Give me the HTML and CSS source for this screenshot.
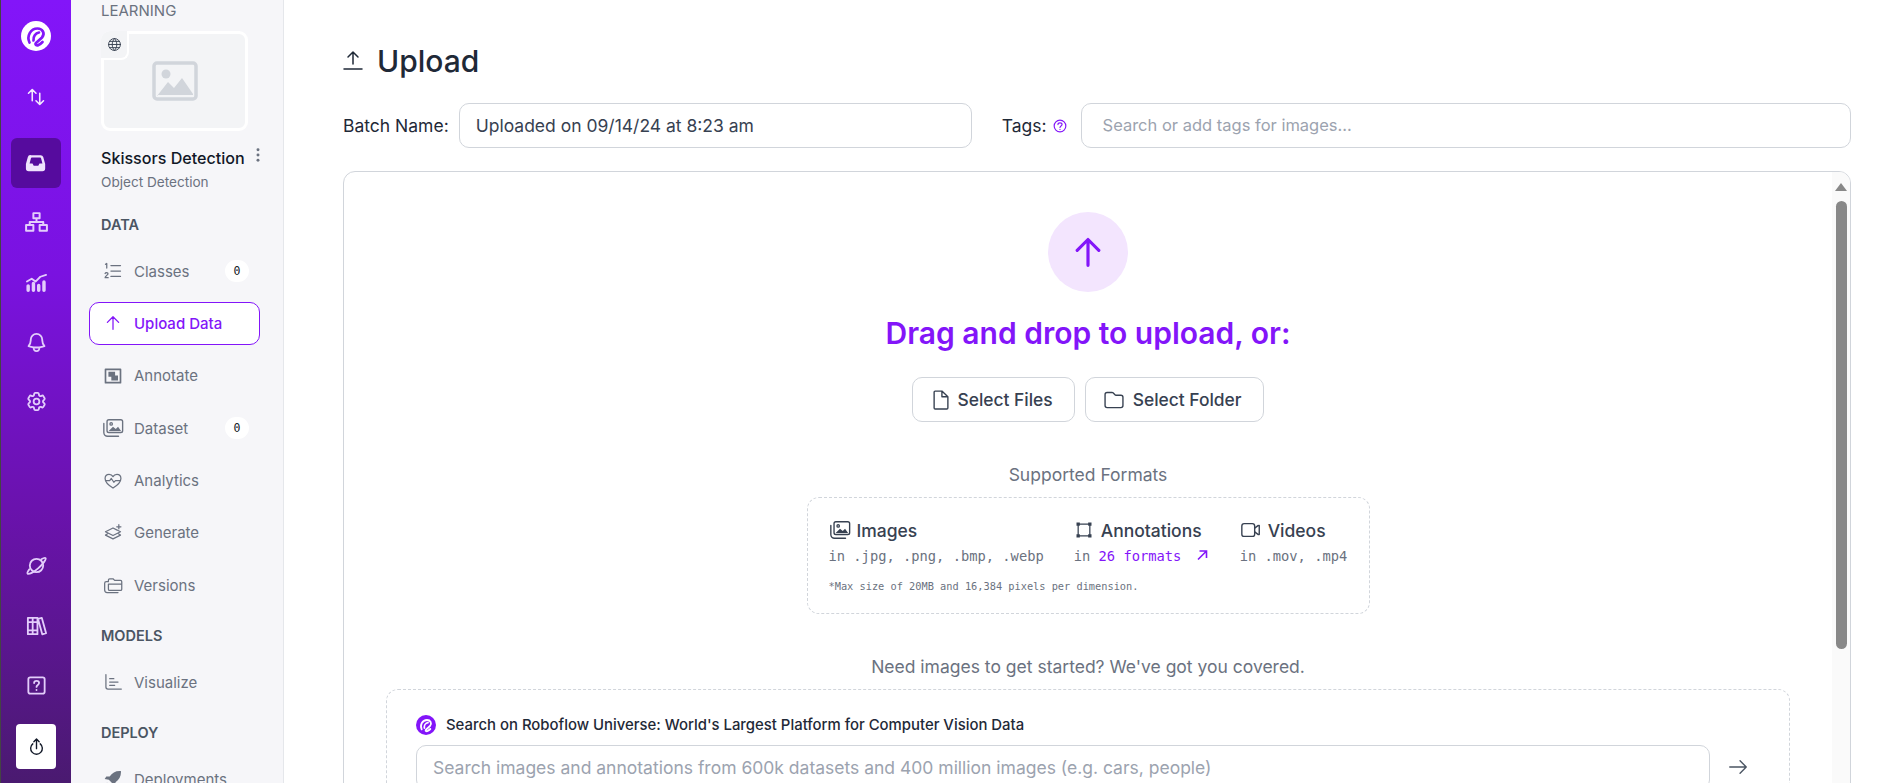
FILE: index.html
```html
<!DOCTYPE html>
<html lang="en">
<head>
	<meta charset="UTF-8">
	<title>Upload</title>
	<link rel="stylesheet" href="styles.css">
</head>
<body>
	<div class="app">
		<nav class="rail">
			<a class="rail-item logo" href="#">
				<svg viewBox="0 0 30 30" width="30" height="30"><circle cx="15" cy="15" r="15" fill="#fff"/><path d="M8.500 21.500C5.500 15 9.500 7.500 16.500 7.500c5 0 8 5 4.500 9l-6 5.500c-1.500 1.500.5 3 2.500 2 1.500-.7 3-2 4-3M12.500 19.500c-.5-4 2-7.500 5.500-8" fill="none" stroke="#8315f9" stroke-width="2.700" stroke-linecap="round"/></svg>
			</a>
			<a class="rail-item arrows" href="#">
				<svg class="icon" viewBox="0 0 24 24" width="20" height="20"><path d="M3 7.500 7.500 3m0 0L12 7.500M7.500 3v13.500m13.500 0L16.500 21m0 0L12 16.500m4.500 4.500V7.500"/></svg>
			</a>
			<a class="rail-item active" href="#">
				<svg class="solid" viewBox="0 0 24 24" width="22" height="22"><path fill-rule="evenodd" d="M7 3.500h10a3 3 0 0 1 2.900 2l2.100 7.500v5a3 3 0 0 1-3 3H4a3 3 0 0 1-3-3v-5l2.100-7.500A3 3 0 0 1 7 3.500Zm.5 2.500a1 1 0 0 0-1 .7L5 12.500h3.200l1.300 2.500h5l1.300-2.500H19l-1.500-5.800a1 1 0 0 0-1-.7Z"/></svg>
			</a>
			<a class="rail-item" href="#">
				<svg class="icon" viewBox="0 0 24 24" width="25" height="25"><path d="M9 3h6v5H9zM12 8v3.500M5.500 11.500h13M5.500 11.500v3M18.500 11.500v3M2 14.500h7V20H2zM15 14.500h7V20h-7z"/></svg>
			</a>
			<a class="rail-item" href="#">
				<svg class="icon" viewBox="0 0 24 24" width="23" height="23"><path d="M2 11l5-3 4 3 5-5 6-2"/><path class="fill" d="M1.500 15.500a1.800 1.800 0 0 1 3.600 0V20a1.800 1.800 0 0 1-3.600 0zM7 13a1.800 1.800 0 0 1 3.600 0v7a1.800 1.800 0 0 1-3.600 0zM12.500 15a1.800 1.800 0 0 1 3.600 0v5a1.800 1.800 0 0 1-3.600 0zM18 11.500a1.800 1.800 0 0 1 3.600 0V20a1.800 1.800 0 0 1-3.600 0z"/></svg>
			</a>
			<a class="rail-item" href="#">
				<svg class="icon" viewBox="0 0 24 24" width="23" height="23"><path d="M14.857 17.082a23.848 23.848 0 0 0 5.454-1.31A8.967 8.967 0 0 1 18 9.75V9A6 6 0 0 0 6 9v.75a8.967 8.967 0 0 1-2.312 6.022c1.733.64 3.56 1.085 5.455 1.31m5.714 0a24.255 24.255 0 0 1-5.714 0m5.714 0a3 3 0 1 1-5.714 0"/></svg>
			</a>
			<a class="rail-item" href="#">
				<svg class="icon" viewBox="0 0 24 24" width="23" height="23"><path d="M9.594 3.94c.09-.542.56-.94 1.11-.94h2.593c.55 0 1.02.398 1.11.94l.213 1.281c.063.374.313.686.645.87.074.04.147.083.22.127.325.196.72.257 1.075.124l1.217-.456a1.125 1.125 0 0 1 1.37.49l1.296 2.247a1.125 1.125 0 0 1-.26 1.431l-1.003.827c-.293.241-.438.613-.43.992a7.723 7.723 0 0 1 0 .255c-.008.378.137.75.43.991l1.004.827c.424.35.534.955.26 1.43l-1.298 2.247a1.125 1.125 0 0 1-1.369.491l-1.217-.456c-.355-.133-.75-.072-1.076.124a6.47 6.47 0 0 1-.22.128c-.331.183-.581.495-.644.869l-.213 1.281c-.09.543-.56.94-1.11.94h-2.594c-.55 0-1.019-.398-1.11-.94l-.213-1.281c-.062-.374-.312-.686-.644-.87a6.52 6.52 0 0 1-.22-.127c-.325-.196-.72-.257-1.076-.124l-1.217.456a1.125 1.125 0 0 1-1.369-.49l-1.297-2.247a1.125 1.125 0 0 1 .26-1.431l1.004-.827c.292-.24.437-.613.43-.991a6.932 6.932 0 0 1 0-.255c.007-.38-.138-.751-.43-.992l-1.004-.827a1.125 1.125 0 0 1-.26-1.43l1.297-2.247a1.125 1.125 0 0 1 1.37-.491l1.216.456c.356.133.751.072 1.076-.124.072-.044.146-.086.22-.128.332-.183.582-.495.644-.869l.214-1.28ZM15 12a3 3 0 1 1-6 0 3 3 0 0 1 6 0Z"/></svg>
			</a>
			<div class="rail-space"></div>
			<a class="rail-item" href="#">
				<svg class="icon" viewBox="0 0 24 24" width="23" height="23"><circle cx="12" cy="12" r="7"/><path d="M17 5.500c2.500-1.500 4-1.800 4.500-1.200.9 1-2.500 6-7.500 10.500S4 21.500 2.800 20.600c-.6-.5-.1-2.200 1.700-4.600"/></svg>
			</a>
			<a class="rail-item" href="#">
				<svg class="icon" viewBox="0 0 24 24" width="23" height="23"><path d="M3 4h5v17H3zM8 4h5v17H8zM3 8.500h10M3 17h10M13.500 5l4-1 4.500 16-4 1.200z"/></svg>
			</a>
			<a class="rail-item" href="#">
				<svg class="icon" viewBox="0 0 24 24" width="23" height="23"><rect x="3.500" y="3.500" width="17" height="17" rx="2"/><path d="M9.500 9.500c0-3.200 5.200-3.200 5.200 0 0 2-2.700 2-2.700 4M12 16.500v.3"/></svg>
			</a>
			<a class="rail-upload" href="#">
				<svg class="icon" viewBox="0 0 16 16" width="17" height="17"><path d="M4.500 5.500A5.500 5.500 0 1 0 11.500 5.500M8 10V1M5.500 3.500 8 1l2.500 2.500"/></svg>
			</a>
		</nav>

		<aside class="sidebar">
			<div class="group-name">LEARNING</div>
			<div class="thumb">
				<span class="thumb-badge">
					<svg class="icon" viewBox="0 0 24 24" width="15" height="15"><circle cx="12" cy="12" r="9.500"/><path d="M2.500 12h19M4 7h16M4 17h16M12 2.500c-5 5-5 14 0 19M12 2.500c5 5 5 14 0 19"/></svg>
				</span>
				<svg class="thumb-img" viewBox="0 0 46 40" width="46" height="40"><rect x="2" y="2" width="42" height="36" rx="3" fill="none" stroke="#d1d5db" stroke-width="3.500"/><circle cx="14" cy="13" r="4.500" fill="#d1d5db"/><path d="M5 35l11-14 6 6 8-10 11 16v1H5z" fill="#d1d5db"/></svg>
			</div>
			<div class="project">
				<span class="project-name">Skissors Detection</span>
				<svg viewBox="0 0 4 16" width="4" height="14" fill="#6b7280"><circle cx="2" cy="2" r="1.700"/><circle cx="2" cy="8" r="1.700"/><circle cx="2" cy="14" r="1.700"/></svg>
			</div>
			<div class="project-type">Object Detection</div>

			<h4 class="section first">DATA</h4>
			<a class="item" href="#">
				<svg class="icon" viewBox="0 0 24 24" width="20" height="20"><path d="M9.500 5.500H21M9.500 12H21M9.500 18.500H21M3 4l1.500-1v5.500M2.500 15c.5-1.500 3.500-1.500 3.500.2 0 1.300-3.500 3-3.500 4.800h3.700"/></svg>
				<span>Classes</span><em class="count">0</em>
			</a>
			<a class="item current" href="#">
				<svg class="icon" viewBox="0 0 24 24" width="20" height="20"><path d="M12 19.500v-15m0 0-6.750 6.750M12 4.500l6.750 6.750"/></svg>
				<span>Upload Data</span>
			</a>
			<a class="item" href="#">
				<svg class="icon" viewBox="0 0 24 24" width="20" height="20"><rect x="3" y="4" width="18" height="16" stroke-width="2"/><path class="fill" d="M6.500 7h8v4.500h3.500v6h-8v-4.500H6.500z"/></svg>
				<span>Annotate</span>
			</a>
			<a class="item" href="#">
				<svg class="icon" viewBox="0 0 24 24" width="22" height="22"><path d="M2 7v10a4 4 0 0 0 4 4h12"/><rect x="5.500" y="3" width="17" height="14" rx="2"/><circle cx="10" cy="7.500" r="1.300"/><path class="fill" d="M7 15.500l5-5 3 2.500 2.500-2.500 3.500 5z"/></svg>
				<span>Dataset</span><em class="count">0</em>
			</a>
			<a class="item" href="#">
				<svg class="icon" viewBox="0 0 24 24" width="20" height="20"><path d="M12 20.500C8 18 2.500 14 2.500 9c0-3 2.200-5 4.800-5 2 0 3.700 1 4.700 2.800C13 5 14.700 4 16.700 4c2.600 0 4.800 2 4.800 5 0 5-5.500 9-9.500 11.500zM3 11.500h5l2-2.500 3 4.500 2-2h6"/></svg>
				<span>Analytics</span>
			</a>
			<a class="item" href="#">
				<svg class="icon" viewBox="0 0 24 24" width="20" height="20"><path d="M3 10.500 12 6l5 2.500M3 10.500l9 4.500 9-4.500-3-1.500M5.500 13 3 14.500l9 4.500 9-4.500-2.500-1.500M19 2v5M16.500 4.500h5"/></svg>
				<span>Generate</span>
			</a>
			<a class="item" href="#">
				<svg class="icon" viewBox="0 0 24 24" width="20" height="20"><path d="M6.500 7.500V6a1.500 1.500 0 0 1 1.500-1.500h4l2 2h7a1.500 1.500 0 0 1 1.500 1.500v9a1.500 1.500 0 0 1-1.500 1.500H8A1.500 1.500 0 0 1 6.500 17V11h16M6.500 8H4A2 2 0 0 0 2 10v8a3 3 0 0 0 3 3h13"/></svg>
				<span>Versions</span>
			</a>

			<h4 class="section">MODELS</h4>
			<a class="item" href="#">
				<svg class="icon" viewBox="0 0 24 24" width="20" height="20"><path d="M3.500 3v15a2.500 2.500 0 0 0 2.500 2.500h16M8 8h5M8 12h10M8 16h6"/></svg>
				<span>Visualize</span>
			</a>

			<h4 class="section">DEPLOY</h4>
			<a class="item" href="#">
				<svg class="solid" viewBox="0 0 24 24" width="20" height="20"><path d="M21.500 2.500c-6-.5-10.500 2-13.500 6.500H4l-2 3 5 1 4 4 1 5 3-2v-4c4.500-3 7-7.500 6.500-13.500zM5 16.500c-2 1-2.500 3-2.500 5 2 0 4-.5 5-2.500z"/></svg>
				<span>Deployments</span>
			</a>
		</aside>

		<main class="main">
			<h1 class="title">
				<svg class="icon" viewBox="0 0 20 24" width="20" height="24"><path d="M10 15V3M5 8l5-5 5 5M1 20h18"/></svg>
				Upload
			</h1>

			<div class="fields">
				<label class="label">Batch Name:</label>
				<div class="field batch">Uploaded on 09/14/24 at 8:23 am</div>
				<label class="label tags-label">Tags:
					<svg class="help" viewBox="0 0 24 24" width="14" height="14"><circle cx="12" cy="12" r="10"/><path d="M8.500 9.500c0-4 7-4 7 0 0 2.500-3.500 2.500-3.500 5M12 17.500v.3"/></svg>
				</label>
				<div class="field tags placeholder">Search or add tags for images...</div>
			</div>

			<section class="card">
				<div class="card-body">
					<div class="circle">
						<svg viewBox="0 0 24 24" width="40" height="40" fill="none" stroke="#8315f9" stroke-width="1.900" stroke-linecap="round" stroke-linejoin="round"><path d="M12 20V4.500m0 0-6.500 6.500M12 4.500l6.500 6.500"/></svg>
					</div>
					<h2 class="drop">Drag and drop to upload, or:</h2>
					<div class="buttons">
						<button class="btn">
							<svg class="icon" viewBox="0 0 24 24" width="22" height="22"><path d="M19.500 8.500 13 2.250H5.600c-.6 0-1.100.5-1.100 1.100v17.300c0 .6.500 1.100 1.100 1.100h12.800c.6 0 1.100-.5 1.100-1.100V8.500Zm-6.500-6.250V8.500h6.500"/></svg>
							Select Files
						</button>
						<button class="btn folder">
							<svg class="icon" viewBox="0 0 24 24" width="22" height="22"><path d="M13.060 6.310l-2.120-2.120a1.500 1.500 0 0 0-1.061-.44H4.500A2.250 2.250 0 0 0 2.250 6v12a2.250 2.250 0 0 0 2.250 2.250h15A2.250 2.250 0 0 0 21.750 18V9a2.250 2.250 0 0 0-2.250-2.250h-5.379a1.500 1.500 0 0 1-1.060-.44Z"/></svg>
							Select Folder
						</button>
					</div>

					<div class="formats-title">Supported Formats</div>
					<div class="formats">
						<div class="format-row">
							<div class="format">
								<div class="format-name">
									<svg class="icon" viewBox="0 0 24 24" width="22" height="22"><path d="M2 7v10a4 4 0 0 0 4 4h12"/><rect x="5.500" y="3" width="17" height="14" rx="2"/><circle cx="10" cy="7.500" r="1.300"/><path class="fill" d="M7 15.500l5-5 3 2.500 2.500-2.500 3.500 5z"/></svg>
									Images
								</div>
								<div class="mono">in .jpg, .png, .bmp, .webp</div>
							</div>
							<div class="format annotations">
								<div class="format-name">
									<svg class="icon" viewBox="0 0 24 24" width="20" height="20"><path d="M5 5h14v14H5z"/><path class="fill" d="M3 3h4v4H3zM17 3h4v4h-4zM3 17h4v4H3zM17 17h4v4h-4z"/></svg>
									Annotations
								</div>
								<div class="mono">in <a href="#">26 formats</a>
									<svg class="link-arrow" viewBox="0 0 12 12" width="12" height="12"><path d="M2 10.500 10 2.500M3.500 2h7v7"/></svg>
								</div>
							</div>
							<div class="format">
								<div class="format-name">
									<svg class="icon" viewBox="0 0 24 24" width="22" height="22"><rect x="2" y="5" width="14" height="14" rx="2.500"/><path d="M16 10l4-3M16 14l4 3M21 7v10"/></svg>
									Videos
								</div>
								<div class="mono">in .mov, .mp4</div>
							</div>
						</div>
						<div class="max-size">*Max size of 20MB and 16,384 pixels per dimension.</div>
					</div>

					<div class="need">Need images to get started? We've got you covered.</div>
					<div class="universe">
						<div class="universe-title">
							<svg viewBox="0 0 30 30" width="20" height="20"><circle cx="15" cy="15" r="15" fill="#8315f9"/><path d="M8.500 21.500C5.500 15 9.500 7.500 16.500 7.500c5 0 8 5 4.500 9l-6 5.500c-1.500 1.500.5 3 2.500 2 1.500-.7 3-2 4-3M12.500 19.500c-.5-4 2-7.500 5.500-8" fill="none" stroke="#fff" stroke-width="2.700" stroke-linecap="round"/></svg>
							Search on Roboflow Universe: World's Largest Platform for Computer Vision Data
						</div>
						<div class="universe-row">
							<div class="field search placeholder">Search images and annotations from 600k datasets and 400 million images (e.g. cars, people)</div>
							<svg class="icon" viewBox="0 0 24 24" width="22" height="22"><path d="M3 12h18m0 0-6.750-6.750M21 12l-6.750 6.750"/></svg>
						</div>
					</div>
				</div>
				<div class="scrollbar">
					<span class="scroll-up"></span>
					<span class="scroll-thumb"></span>
				</div>
			</section>
		</main>
	</div>
</body>
</html>
```

FILE: styles.css
```css
html, body, h1, h2, h4 {
	margin: 0;
	padding: 0;
}
a {
	text-decoration: none;
	color: inherit;
}
body {
	height: 783px;
	overflow: hidden;
	background: #fff;
	color: #1f2937;
	font-family: Inter, "Liberation Sans", sans-serif;
}
.app {
	display: flex;
	height: 783px;
	overflow: hidden;
}
.icon {
	flex: none;
	fill: none;
	stroke: currentColor;
	stroke-width: 1.5;
	stroke-linecap: round;
	stroke-linejoin: round;
}
.icon .fill {
	fill: currentColor;
	stroke: none;
}
.solid {
	flex: none;
	fill: currentColor;
}

/* left purple rail */
.rail {
	flex: none;
	width: 70px;
	border-left: 1px solid #444;
	padding-top: 21px;
	display: flex;
	flex-direction: column;
	align-items: center;
	color: #e3cdfb;
	background: linear-gradient(#8315f9 0, #7a12e0 35%, #6a12ad 65%, #4a1a70 100%);
}
.rail .icon {
	stroke-width: 1.9;
}
.rail-item {
	width: 50px;
	height: 50px;
	flex: none;
	margin-bottom: 9.700px;
	display: flex;
	align-items: center;
	justify-content: center;
	border-radius: 6px;
}
.logo {
	height: 30px;
	margin-bottom: 26px;
}
.arrows {
	color: #f3eafe;
	height: 40px;
	margin-bottom: 21px;
}
.rail-item.active {
	background: #560b9e;
	color: #efe3fd;
}
.rail-space {
	flex: 1;
}
.rail-upload {
	width: 40px;
	height: 45px;
	margin: 4px 0 14px;
	background: #fff;
	color: #111827;
	border-radius: 4px;
	display: flex;
	align-items: center;
	justify-content: center;
}
.rail-upload .icon {
	stroke-width: 1.300;
}

/* project sidebar */
.sidebar {
	flex: none;
	width: 189px;
	padding: 3px 5px 0 18px;
	background: #f6f6f9;
	border-right: 1px solid #e5e7eb;
	overflow: hidden;
}
.group-name {
	margin-left: 12px;
	font-size: 15px;
	line-height: 15px;
	color: #6b7280;
}
.thumb {
	position: relative;
	box-sizing: border-box;
	width: 147px;
	height: 100px;
	margin: 13px 0 0 12px;
	border: 3px solid #fff;
	border-radius: 9px;
	background: #f3f4f6;
	display: flex;
	align-items: center;
	justify-content: center;
}
.thumb-badge {
	position: absolute;
	top: -3px;
	left: -3px;
	width: 28px;
	height: 29px;
	background: #f3f4f6;
	border-right: 2px solid #fff;
	border-bottom: 2px solid #fff;
	border-radius: 9px 0 8px 0;
	color: #374151;
	display: flex;
	align-items: center;
	justify-content: center;
	box-sizing: border-box;
}
.project {
	display: flex;
	align-items: flex-start;
	gap: 11px;
	margin: 17px 0 0 12px;
}
.project-name {
	font-size: 16.100px;
	line-height: 20px;
	font-weight: 500;
	color: #111827;
	white-space: nowrap;
}
.project-type {
	margin: 6px 0 0 12px;
	font-size: 13.600px;
	line-height: 16px;
	color: #6b7280;
}
.section {
	margin: 21.500px 0 16.500px 12px;
	font-size: 14.500px;
	line-height: 16px;
	font-weight: 600;
	color: #4b5563;
}
.section.first {
	margin-top: 27px;
}
.item {
	box-sizing: border-box;
	width: 171px;
	height: 43px;
	margin-bottom: 9.400px;
	padding-left: 12px;
	border: 1px solid transparent;
	border-radius: 10px;
	display: flex;
	align-items: center;
	font-size: 15px;
	color: #6b7280;
}
.item svg {
	width: 22px;
}
.item span {
	margin-left: 10px;
}
.item.current {
	background: #fff;
	border-color: #8315f9;
	color: #8315f9;
	font-weight: 500;
}
.count {
	margin-left: auto;
	margin-right: 10px;
	width: 24px;
	height: 22px;
	border-radius: 11px;
	background: #fff;
	color: #111827;
	font: 11.500px/22px "DejaVu Sans Mono", monospace;
	text-align: center;
}

/* main column */
.main {
	flex: 1;
	min-width: 0;
	padding: 41px 44px 0 59px;
	overflow: hidden;
}
.title {
	display: flex;
	align-items: center;
	gap: 14px;
	height: 40px;
	font-size: 30px;
	font-weight: 500;
	color: #1f2937;
}
.fields {
	display: flex;
	align-items: center;
	margin-top: 22px;
}
.label {
	font-size: 17.500px;
	color: #1f2937;
	white-space: nowrap;
	display: flex;
	align-items: center;
	gap: 6px;
}
.field {
	box-sizing: border-box;
	height: 45px;
	border: 1px solid #d1d5db;
	border-radius: 10px;
	font-size: 17.500px;
	line-height: 43px;
	padding-left: 16px;
	white-space: nowrap;
	overflow: hidden;
}
.placeholder {
	color: #9ca3af;
}
.batch {
	width: 513px;
	margin-left: 10px;
	color: #374151;
}
.tags-label {
	margin-left: 30px;
}
.help {
	fill: none;
	stroke: #8315f9;
	stroke-width: 2;
	stroke-linecap: round;
}
.tags {
	flex: 1;
	margin-left: 14px;
	padding-left: 21px;
	font-size: 16.500px;
	line-height: 42px;
}

/* upload card */
.card {
	box-sizing: border-box;
	height: 700px;
	margin-top: 23px;
	border: 1px solid #d1d5db;
	border-radius: 12px;
	display: flex;
	overflow: hidden;
}
.card-body {
	flex: 1;
	min-width: 0;
	padding: 40px 42px 0;
	display: flex;
	flex-direction: column;
	align-items: center;
}
.circle {
	width: 80px;
	height: 80px;
	border-radius: 50%;
	background: #f3e5fe;
	display: flex;
	align-items: center;
	justify-content: center;
}
.drop {
	margin-top: 22px;
	font-size: 30px;
	line-height: 38px;
	font-weight: 600;
	color: #8315f9;
}
.buttons {
	display: flex;
	gap: 10px;
	margin-top: 25px;
}
.btn {
	height: 45px;
	padding: 0 21px 0 17px;
	display: flex;
	align-items: center;
	gap: 5px;
	border: 1px solid #d1d5db;
	border-radius: 10px;
	background: #fff;
	color: #374151;
	font: 500 17.400px Inter, sans-serif;
}
.folder {
	padding-right: 21px;
	gap: 8px;
}
.formats-title {
	margin-top: 43px;
	font-size: 17.500px;
	line-height: 20px;
	color: #6b7280;
}
.formats {
	box-sizing: border-box;
	width: 563px;
	height: 117px;
	margin-top: 12px;
	padding: 20px 21px 0;
	border: 1px dashed #d1d5db;
	border-radius: 12px;
}
.format-row {
	display: flex;
}
.format {
	margin-right: 30px;
}
.format:last-child {
	margin-right: 0;
}
.annotations {
	margin-right: 32px;
}
.annotations .format-name {
	gap: 7px;
}
.format-name {
	display: flex;
	align-items: center;
	gap: 6px;
	height: 24px;
	font-size: 17.500px;
	font-weight: 500;
	color: #374151;
}
.mono {
	margin-top: 5px;
	font: 13.750px/18px "DejaVu Sans Mono", monospace;
	color: #6b7280;
	white-space: nowrap;
}
.mono a {
	color: #8315f9;
}
.link-arrow {
	margin-left: 6px;
	fill: none;
	stroke: #8315f9;
	stroke-width: 1.600;
}
.max-size {
	margin-top: 14px;
	font: 10.300px/14px "DejaVu Sans Mono", monospace;
	color: #6b7280;
}
.need {
	margin-top: 43px;
	font-size: 17.500px;
	line-height: 20px;
	color: #6b7280;
}
.universe {
	box-sizing: border-box;
	width: 100%;
	height: 140px;
	margin-top: 12px;
	padding: 25px 40px 0 29px;
	border: 1px dashed #d1d5db;
	border-radius: 12px;
}
.universe-title {
	display: flex;
	align-items: center;
	gap: 10px;
	font-size: 14.900px;
	font-weight: 500;
	line-height: 20px;
	color: #1f2937;
}
.universe-row {
	display: flex;
	align-items: flex-start;
	gap: 17px;
	margin-top: 10px;
	color: #4b5563;
}
.universe-row .icon {
	margin-top: 11px;
}
.search {
	flex: 1;
}

/* fake scrollbar of the card */
.scrollbar {
	flex: none;
	width: 18px;
	background: #fafafa;
	display: flex;
	flex-direction: column;
	align-items: center;
}
.scroll-up {
	margin-top: 11px;
	border: 6.500px solid transparent;
	border-top: 0;
	border-bottom: 8px solid #888;
}
.scroll-thumb {
	width: 11px;
	height: 448px;
	margin-top: 10px;
	border-radius: 6px;
	background: #888;
}
```
